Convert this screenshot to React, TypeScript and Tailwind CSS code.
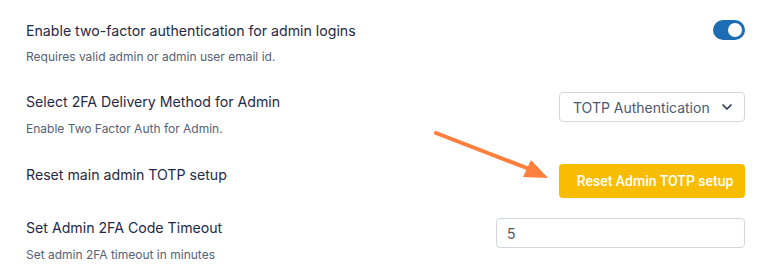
import React from "react";

export default function App() {
  const font = { fontFamily: "Inter, 'Noto Sans', sans-serif" };
  return (
    <div className="relative w-[769px] h-[273px] bg-white overflow-hidden" style={font}>
      <div className="flex flex-col pl-[26px] pr-[24px]">
        {/* 2FA toggle */}
        <div className="flex justify-between items-start pt-[21px]">
          <div className="flex flex-col">
            <span className="text-[14.15px] leading-[20px] text-[#1f2a48]">Enable two-factor authentication for admin logins</span>
            <span className="mt-2 text-[12px] leading-[16px] text-[#566176]">Requires valid admin or admin user email id.</span>
          </div>
          <div className="mt-[-1px] w-[32px] h-[20px] rounded-full bg-[#1c6db4] flex items-center justify-end pr-[3px]">
            <div className="w-[14px] h-[14px] rounded-full bg-white" />
          </div>
        </div>

        {/* delivery method */}
        <div className="flex justify-between items-start mt-[27px]">
          <div className="flex flex-col">
            <span className="text-[14.15px] leading-[20px] text-[#1f2a48]">Select 2FA Delivery Method for Admin</span>
            <span className="mt-[9px] text-[12px] leading-[16px] text-[#566176]">Enable Two Factor Auth for Admin.</span>
          </div>
          <div className="w-[186px] h-[30px] border border-[#d3d6dc] rounded-[4px] flex items-center justify-between pl-[13px] pr-[9px]">
            <span className="text-[14px] text-[#4d5870]">TOTP Authentication</span>
            <svg width="16" height="16" viewBox="0 0 24 24" fill="none" stroke="#2a3654" strokeWidth="2.6" strokeLinecap="round" strokeLinejoin="round">
              <path d="M6 9l6 6 6-6" />
            </svg>
          </div>
        </div>

        {/* reset totp */}
        <div className="flex justify-between items-start mt-[27px]">
          <span className="mt-[1px] text-[14.15px] leading-[20px] text-[#1f2a48]">Reset main admin TOTP setup</span>
          <button
            className="w-[186px] h-[34px] rounded-[4px] bg-[#f8bc00] text-white text-[14px] font-medium flex items-center justify-center pl-[6px]"
            style={{ fontFamily: "Roboto, 'Liberation Sans', sans-serif" }}
          >
            Reset Admin TOTP setup
          </button>
        </div>

        {/* timeout */}
        <div className="flex justify-between items-start mt-[20px]">
          <div className="flex flex-col">
            <span className="text-[14.15px] leading-[20px] text-[#1f2a48]">Set Admin 2FA Code Timeout</span>
            <span className="mt-[9px] text-[12px] leading-[16px] text-[#566176]">Set admin 2FA timeout in minutes</span>
          </div>
          <div className="w-[249px] h-[30px] border border-[#d3d6dc] rounded-[4px] flex items-center pl-[10px]">
            <span className="text-[14px] text-[#4d5870]">5</span>
          </div>
        </div>
      </div>

      {/* annotation arrow */}
      <svg className="absolute left-0 top-0 pointer-events-none" width="769" height="273">
        <line x1="436" y1="133" x2="532" y2="170" stroke="#ff7f3c" strokeWidth="4" strokeLinecap="round" />
        <polygon points="548,178 523,177 531,160" fill="#ff7f3c" />
      </svg>
    </div>
  );
}
